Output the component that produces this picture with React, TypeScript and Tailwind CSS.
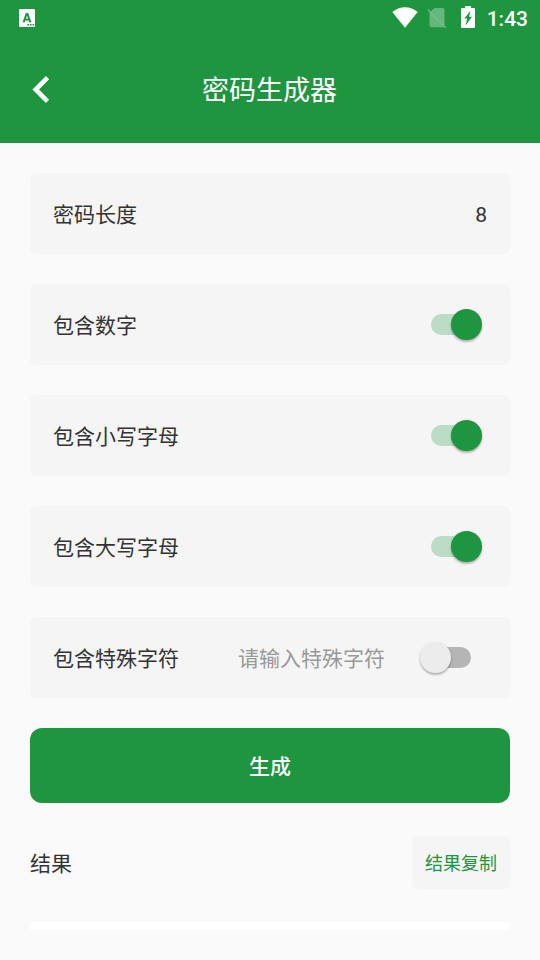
import React, { useState } from "react";

const options = [
	{ id: "number", name: "包含数字" },
	{ id: "lower", name: "包含小写字母" },
	{ id: "upper", name: "包含大写字母" },
];

function Switch({ checked, onChange }: { checked: boolean; onChange: () => void }) {
	return (
		<button
			role="switch"
			aria-checked={checked}
			onClick={onChange}
			className={`relative h-[21px] w-[49.5px] rounded-full ${
				checked ? "bg-[#bbddc5]" : "bg-[#b5b5b5]"
			}`}
		>
			<span
				className={`absolute top-[-5px] size-[31px] rounded-full shadow-[0_2px_2px_rgba(0,0,0,0.2),0_1px_3px_rgba(0,0,0,0.12)] ${
					checked ? "left-[20px] bg-[#1e953f]" : "left-[-1.5px] bg-[#ececec]"
				}`}
			/>
		</button>
	);
}

function StatusBar() {
	return (
		<div className="flex h-9 items-start justify-between pl-[19px] pr-3">
			<svg className="mt-[9px]" width="16" height="18" viewBox="0 0 16 18">
				<rect width="16" height="18" rx="1.2" fill="#fff" />
				<path
					d="M3.6 13.200 6.800 4h2.400l3.200 9.200h-2.300l-.5-1.600H6.400l-.5 1.600zM7 9.800h2L8 6.500z"
					fill="#1e953f"
					fillRule="evenodd"
				/>
				<path d="M8.3 15.8h7" stroke="#1e953f" strokeWidth="1.5" strokeDasharray="1.7 0.9" />
			</svg>
			<div className="flex">
				<svg className="mt-[7px]" width="26" height="21" viewBox="0 0 26 21">
					<path d="M13 20.8.3 5C4 2 8.300.3 13 .3S22 2 25.700 5z" fill="#fff" />
				</svg>
				<svg className="ml-[9px] mt-2" width="20" height="21" viewBox="0 0 20 21">
					<path
						d="M7.500 0H15.500Q17.500 0 17.500 2V17.600L3.600 3.600zM2.500 3.600 18 19.200H4.500Q2.500 19.200 2.500 17.200z"
						fill="#fff"
						fillOpacity="0.32"
					/>
					<path d="M.7 1.300 19 19.800" stroke="#fff" strokeOpacity="0.3" strokeWidth="1.600" />
				</svg>
				<svg className="ml-[14px] mt-[6px]" width="14" height="22" viewBox="0 0 14 22">
					<path d="M4 0h6v2h3q1 0 1 1v18q0 1-1 1H1q-1 0-1-1V3q0-1 1-1h3z" fill="#fff" />
					<path d="M9.700 4.800 3.200 12.500h3L4.600 19.500 11 10.800H8z" fill="#1e953f" />
				</svg>
				<span className="ml-3 mt-1 font-['Roboto'] text-[21px] font-medium leading-[30px] text-white">
					1:43
				</span>
			</div>
		</div>
	);
}

function App() {
	const [enabled, setEnabled] = useState<any>({
		number: true,
		lower: true,
		upper: true,
		special: false,
	});

	const handleToggle = (id: string) => {
		setEnabled({ ...enabled, [id]: !enabled[id] });
	};

	return (
		<div className="h-[960px] w-[540px] overflow-hidden bg-[#fafafa] font-['Roboto','Noto_Sans_CJK_SC',sans-serif] text-[21px] text-[#333333]">
			<header className="h-[143px] bg-[#1e953f] text-white">
				<StatusBar />
				<div className="grid h-[107px] grid-cols-[60px_1fr_60px] items-center">
					<button className="pl-8" aria-label="返回">
						<svg width="18" height="28" viewBox="0 0 18 28">
							<path d="M15.500 1.700 3.700 13.500l11.800 11.800" fill="none" stroke="#fff" strokeWidth="4.600" />
						</svg>
					</button>
					<h1 className="pr-px pt-0.5 text-center text-[27px] leading-10">密码生成器</h1>
				</div>
			</header>

			<main className="flex flex-col gap-[30px] px-[30px] pt-[30px]">
				<div className="flex h-[81px] items-center justify-between rounded-md bg-[#f5f5f5] px-[23px]">
					<span className="pt-1">密码长度</span>
					<span className="pt-1">8</span>
				</div>

				{options.map((option) => (
					<div
						key={option.id}
						className="flex h-[81px] items-center justify-between rounded-md bg-[#f5f5f5] pl-[23px] pr-[29.5px]"
					>
						<span className="pt-1">{option.name}</span>
						<Switch
							checked={enabled[option.id]}
							onChange={() => handleToggle(option.id)}
						/>
					</div>
				))}

				<div className="flex h-[81px] items-center rounded-md bg-[#f5f5f5] pl-[23px] pr-[39px]">
					<span className="pt-1">包含特殊字符</span>
					<input
						type="text"
						placeholder="请输入特殊字符"
						className="ml-[59px] mr-auto w-[160px] pt-1 outline-none placeholder:text-[#999999]"
					/>
					<Switch
						checked={enabled.special}
						onChange={() => handleToggle("special")}
					/>
				</div>

				<button className="h-[75px] rounded-xl bg-[#1e953f] pt-1 font-medium text-white">
					生成
				</button>

				<div className="mt-[3px] flex h-[53px] items-center justify-between">
					<span className="pt-1">结果</span>
					<button className="h-full w-[98px] rounded-md bg-[#f5f5f5] pt-0.5 text-lg text-[#1e953f]">
						结果复制
					</button>
				</div>

				<div className="mt-[3px] h-2 bg-white" />
			</main>
		</div>
	);
}

export default App;
